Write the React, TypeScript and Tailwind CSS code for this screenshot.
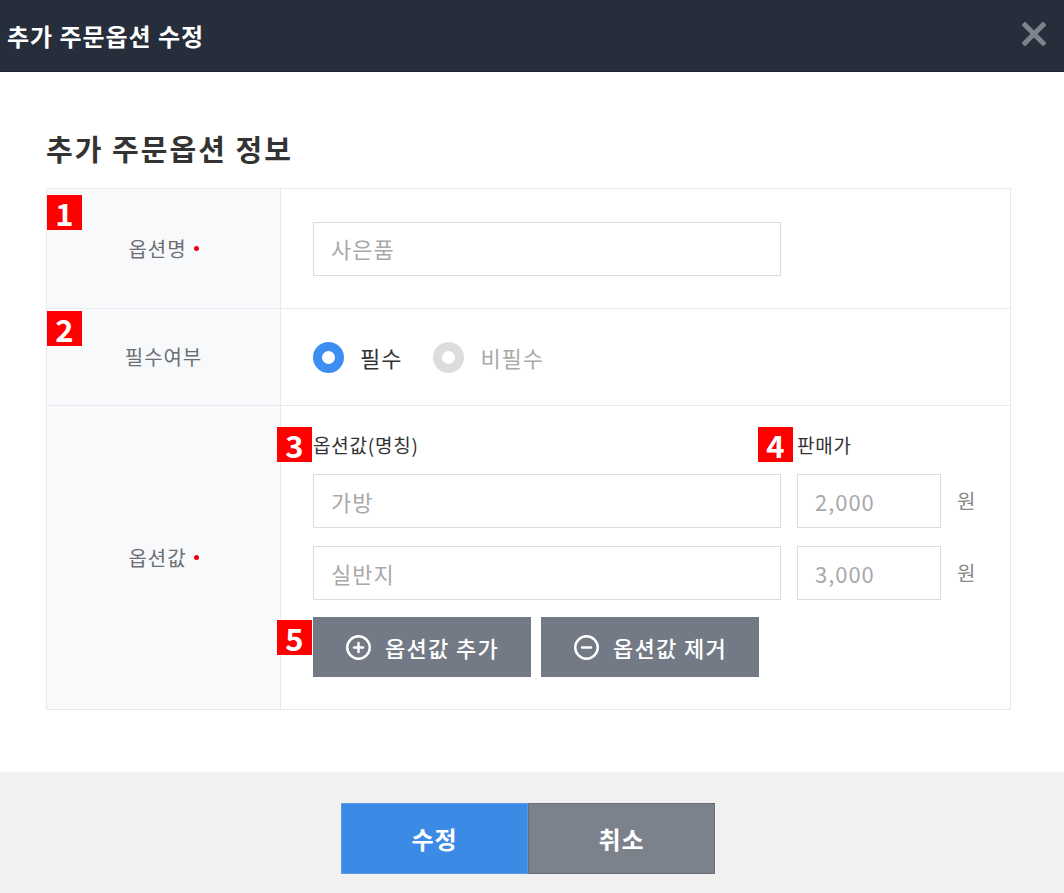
import { CirclePlus, CircleMinus } from "lucide-react";

const font = { fontFamily: '"Noto Sans CJK KR", "Noto Sans", sans-serif' };

function Badge({ n, className }: { n: number; className: string }) {
  return (
    <span
      className={`absolute flex h-[35px] w-[35px] items-center justify-center bg-[#ff0000] text-[31px] font-bold leading-none tracking-normal text-white ${className}`}
    >
      {n}
    </span>
  );
}

function Required() {
  return <span className="ml-[7px] inline-block h-[5px] w-[5px] rounded-full bg-[#e60012]" />;
}

function Label({ children, required }: { children: string; required?: boolean }) {
  return (
    <div className="flex w-[234px] shrink-0 items-center justify-center border-r border-[#e8e9ec] bg-[#f8f9fb] text-[20px] text-[#6b6e73]">
      {children}
      {required && <Required />}
    </div>
  );
}

function TextBox({ value, className }: { value: string; className: string }) {
  return (
    <div
      className={`flex h-[54px] items-center border border-[#dcdcdc] bg-white px-[17px] text-[22px] text-[#a9a9a9] ${className}`}
    >
      {value}
    </div>
  );
}

export default function App() {
  const values = [
    { name: "가방", price: "2,000" },
    { name: "실반지", price: "3,000" },
  ];

  return (
    <div style={font} className="flex h-[893px] w-[1064px] flex-col bg-white tracking-[0.06em]">
      <div className="flex h-[72px] shrink-0 items-center justify-between border-b border-[#1d2330] bg-[#262d3b] pl-[7px] pr-[18px]">
        <h1 className="text-[24px] font-bold tracking-[0.04em] text-white">추가 주문옵션 수정</h1>
        <svg width="24" height="24" viewBox="0 0 24 24" className="mb-[4px]">
          <path d="M3 3L21 21M21 3L3 21" stroke="#7d828b" strokeWidth="5" strokeLinecap="square" />
        </svg>
      </div>

      <div className="flex-1 px-[46px]">
        <h2 className="mt-[58px] text-[29px] font-bold leading-[36px] tracking-[0.07em] text-[#333]">
          추가 주문옵션 정보
        </h2>

        <div className="mt-[22px] w-[965px] border border-[#e8e9ec]">
          <div className="relative flex h-[120px] border-b border-[#e8e9ec]">
            <Badge n={1} className="left-0 top-[6px]" />
            <Label required>옵션명</Label>
            <div className="flex items-center px-[32px]">
              <TextBox value="사은품" className="w-[468px]" />
            </div>
          </div>

          <div className="relative flex h-[97px] border-b border-[#e8e9ec]">
            <Badge n={2} className="left-0 top-[2px]" />
            <Label>필수여부</Label>
            <div className="flex items-center px-[32px] text-[22px]">
              <span className="h-[31px] w-[31px] rounded-full border-[9px] border-[#3d8ef0] bg-white" />
              <span className="ml-[16px] text-[#333]">필수</span>
              <span className="ml-[31px] h-[31px] w-[31px] rounded-full border-[9px] border-[#dddddd] bg-white" />
              <span className="ml-[16px] text-[#aaa]">비필수</span>
            </div>
          </div>

          <div className="flex">
            <Label required>옵션값</Label>
            <div className="flex flex-col px-[32px] pb-[32px] pt-[21px]">
              <div className="flex h-[36px] items-center text-[19px] tracking-[0.04em] text-[#333]">
                <span className="relative w-[484px]">
                  <Badge n={3} className="-left-[36px] -top-[4px]" />
                  옵션값(명칭)
                </span>
                <span className="relative">
                  <Badge n={4} className="-left-[39px] -top-[4px]" />
                  판매가
                </span>
              </div>
              <div className="mt-[11px] flex flex-col gap-[18px]">
                {values.map((v) => (
                  <div key={v.name} className="flex items-center">
                    <TextBox value={v.name} className="w-[468px]" />
                    <TextBox value={v.price} className="ml-[16px] w-[144px]" />
                    <span className="ml-[16px] text-[20px] text-[#888]">원</span>
                  </div>
                ))}
              </div>
              <div className="relative mt-[17px] flex gap-[10px]">
                <Badge n={5} className="-left-[36px] top-[3px]" />
                <button className="flex h-[60px] w-[218px] items-center justify-center gap-[13px] bg-[#737a85] text-[22px] font-medium tracking-[0.06em] text-white">
                  <CirclePlus size={27} strokeWidth={2.2} />
                  옵션값 추가
                </button>
                <button className="flex h-[60px] w-[218px] items-center justify-center gap-[13px] bg-[#737a85] text-[22px] font-medium tracking-[0.06em] text-white">
                  <CircleMinus size={27} strokeWidth={2.2} />
                  옵션값 제거
                </button>
              </div>
            </div>
          </div>
        </div>
      </div>

      <div className="flex h-[121px] shrink-0 justify-center bg-[#f1f1f1] pr-[8px] pt-[31px]">
        <div className="flex h-[71px]">
          <button className="w-[187px] border border-[#5a9be8] bg-[#3a8ae6] text-[24px] font-bold text-white">
            수정
          </button>
          <button className="w-[187px] border border-[#686e78] bg-[#7c828c] text-[24px] font-bold text-white">
            취소
          </button>
        </div>
      </div>
    </div>
  );
}
